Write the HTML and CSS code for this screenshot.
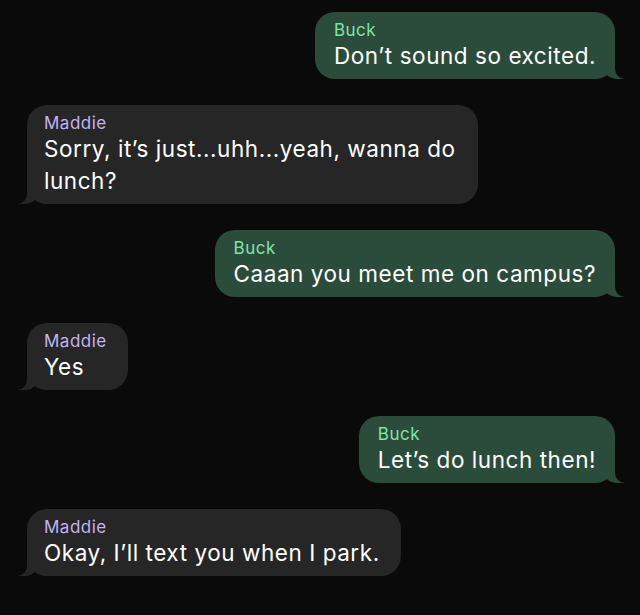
FILE: index.html
```html
<!DOCTYPE html>
<html lang="en">
<head>
    <meta charset="UTF-8">
    <meta name="viewport" content="width=device-width, initial-scale=1.0">
    <title>Messages</title>
    <link rel="stylesheet" href="styles.css">
</head>
<body>
    <div class="thread">
        <div class="bubble me">
            <div class="name">Buck</div>
            <div class="text">Don’t sound so excited.</div>
        </div>
        <div class="bubble them">
            <div class="name">Maddie</div>
            <div class="text">Sorry, it’s just...uhh...yeah, wanna do lunch?</div>
        </div>
        <div class="bubble me">
            <div class="name">Buck</div>
            <div class="text">Caaan you meet me on campus?</div>
        </div>
        <div class="bubble them">
            <div class="name">Maddie</div>
            <div class="text">Yes</div>
        </div>
        <div class="bubble me">
            <div class="name">Buck</div>
            <div class="text">Let’s do lunch then!</div>
        </div>
        <div class="bubble them">
            <div class="name">Maddie</div>
            <div class="text">Okay, I’ll text you when I park.</div>
        </div>
    </div>
</body>
</html>
```

FILE: styles.css
```css
body {
    margin: 0;
    background-color: #0a0a0a;
    font-family: Inter, "Noto Sans", sans-serif;
    color: #ffffff;
}

.thread {
    display: flex;
    flex-direction: column;
    gap: 26px;
    padding: 12px 25px 0 27px;
}

.bubble {
    position: relative;
    max-width: 451px;
    box-sizing: border-box;
    padding: 8px 19px 7px 17px;
    border-radius: 20px;
}

.name {
    font-size: 17px;
    line-height: 20px;
    letter-spacing: 0.5px;
}

.text {
    font-size: 22.5px;
    line-height: 32px;
    letter-spacing: 0.55px;
}

.me {
    align-self: flex-end;
    background-color: #2b4c3b;
    padding: 8px 19px 7px 19px;
}

.me .name {
    color: #7fe3ab;
}

.them {
    align-self: flex-start;
    background-color: #262626;
    padding-right: 21px;
}

.them .name {
    color: #c3b4f0;
}

/* tails */
.bubble::before,
.bubble::after {
    content: "";
    position: absolute;
    bottom: 0;
    height: 22px;
}

.me::before {
    right: -9px;
    width: 22px;
    background-color: #2b4c3b;
    border-bottom-left-radius: 16px 14px;
}

.me::after {
    right: -12px;
    width: 12px;
    background-color: #0a0a0a;
    border-bottom-left-radius: 10px;
}

.them::before {
    left: -9px;
    width: 22px;
    background-color: #262626;
    border-bottom-right-radius: 16px 14px;
}

.them::after {
    left: -12px;
    width: 12px;
    background-color: #0a0a0a;
    border-bottom-right-radius: 10px;
}
```
